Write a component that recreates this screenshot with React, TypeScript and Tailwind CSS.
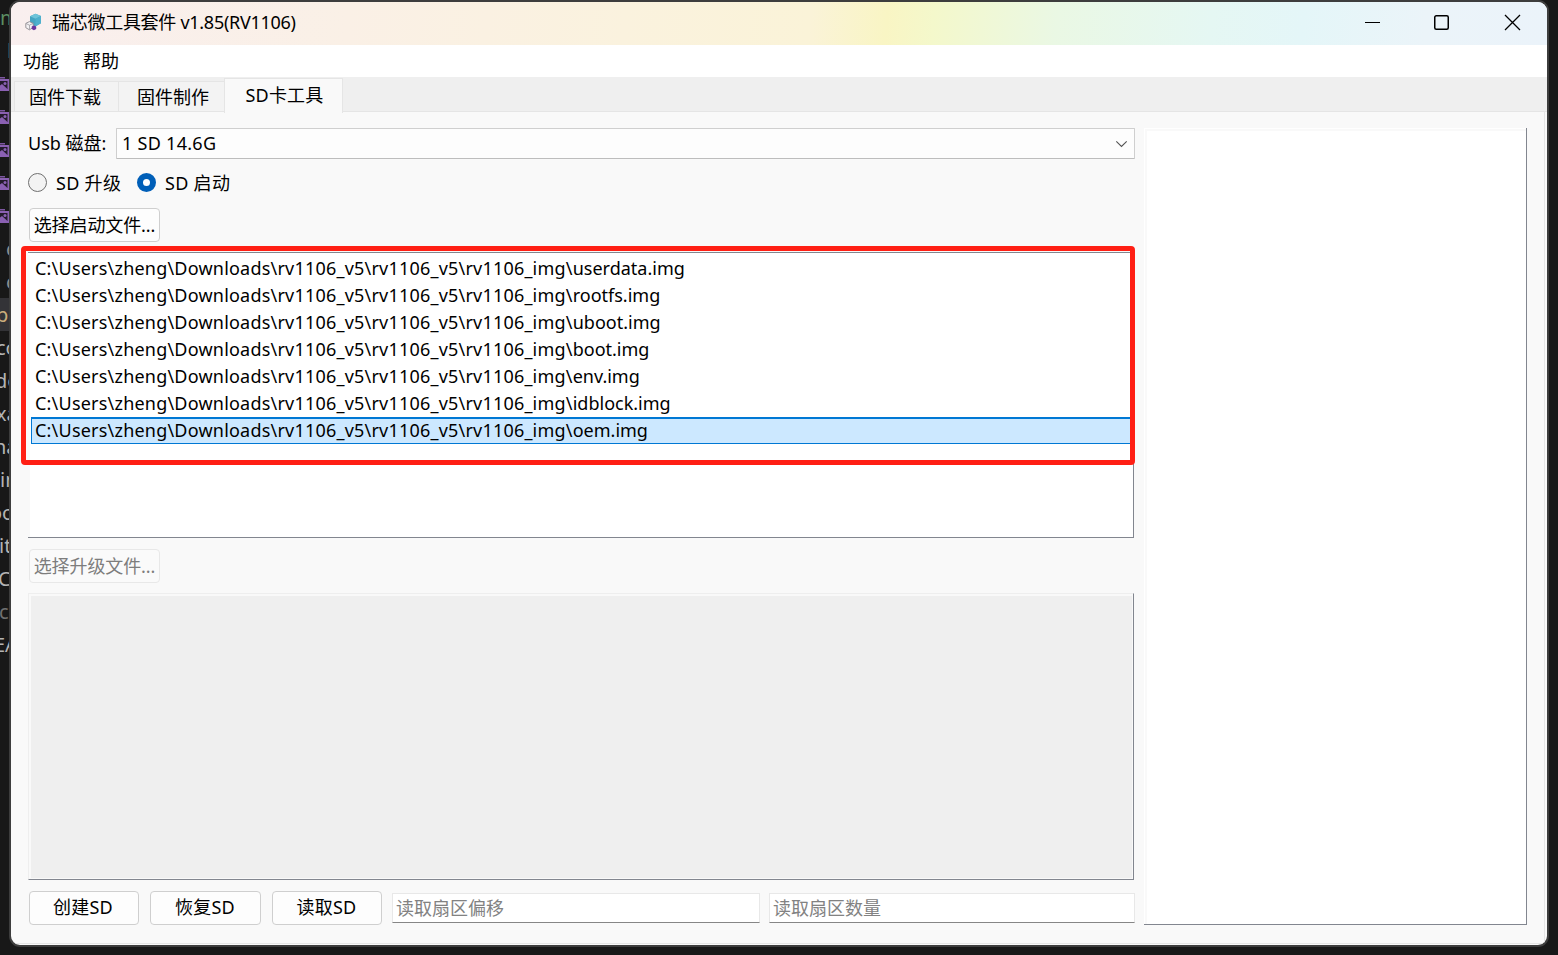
import React from "react";

const ui = "font-['Noto_Sans','Noto_Sans_CJK_SC',sans-serif]";

const base = "C:\\Users\\zheng\\Downloads\\rv1106_v5\\rv1106_v5\\rv1106_img\\";
const files = ["userdata.img", "rootfs.img", "uboot.img", "boot.img", "env.img", "idblock.img", "oem.img"];

const behind: { t: string; c: string }[] = [
  { t: "m", c: "text-[#5c8f62] pl-0" },
  { t: "b", c: "text-[#2f8f75] pl-[7px]" },
  { t: "*", c: "" },
  { t: "*", c: "" },
  { t: "*", c: "" },
  { t: "*", c: "" },
  { t: "*", c: "" },
  { t: "c", c: "text-[#8f8f8f] pl-[6px]" },
  { t: "c", c: "text-[#8f8f8f] pl-[6px]" },
  { t: "pu", c: "bg-[#333337] text-[#c9ad7c] -ml-[4px]" },
  { t: "co", c: "text-[#b4b4b4] -ml-[4px]" },
  { t: "de", c: "text-[#b4b4b4] -ml-[5px]" },
  { t: "xa", c: "text-[#b4b4b4] -ml-[4px]" },
  { t: "na", c: "text-[#b4b4b4] -ml-[6px]" },
  { t: "in", c: "text-[#b4b4b4]" },
  { t: "oo", c: "text-[#b4b4b4] -ml-[10px]" },
  { t: "it", c: "text-[#b4b4b4] -ml-px" },
  { t: "C", c: "text-[#b4b4b4] -ml-[2px]" },
  { t: "cl", c: "text-[#707070] -ml-px" },
  { t: "EA", c: "text-[#b4b4b4] -ml-[6px]" },
];

function Picture() {
  return (
    <svg width="10" height="16" viewBox="0 0 10 16" className="block shrink-0">
      <path d="M0 1h5v1.5H0z" fill="#7c56a0" />
      <path d="M0 3h9.5v12H0z" fill="#8a60b2" />
      <path d="M0 5h7.5v8H0z" fill="#231b2c" />
      <path d="M0 9.5 2 8l5.5 5H0z" fill="#8a60b2" />
      <circle cx="5" cy="7.5" r="1.5" fill="#8a60b2" />
    </svg>
  );
}

function AppIcon() {
  return (
    <svg width="17" height="18" viewBox="0 0 17 18" className="-mt-[3px] block shrink-0">
      <path d="M10.5 0.8 16 3v7.2L10.3 13.4 5 10.5V3.2z" fill="#45a5c2" />
      <path d="M10.5 0.8 16 3 10.6 5.8 5 3.2z" fill="#6fc4d9" />
      <path d="M10.6 5.8 16 3v7.2L10.3 13.4z" fill="#4eb0cd" />
      <path d="M4.4 8.6 8.2 10.3v4.2l-3.8 2.3L.8 14.7v-4.3z" fill="#f4f2f4" stroke="#8d8a90" strokeWidth="0.9" />
      <path d="M1 10.5 4.5 12.2 8 10.4M4.5 12.2v4.4" fill="none" stroke="#9c999f" strokeWidth="0.8" />
      <path d="m9 12.5 2.2 1v2.4l-2.3 1.4-2.2-1.3v-2.5z" fill="#6a35a0" />
    </svg>
  );
}

function Button({ children, className }: { children: React.ReactNode; className: string }) {
  return (
    <button className={`flex h-[34px] shrink-0 items-center justify-center whitespace-nowrap rounded-[4px] border ${className}`}>
      {children}
    </button>
  );
}

export default function App() {
  return (
    <div className={`relative flex h-[955px] w-[1558px] overflow-hidden bg-[#181818] text-[18px] leading-[26px] text-black ${ui}`}>
      <div className="-mr-[2px] flex w-[11px] shrink-0 flex-col overflow-hidden pt-px">
        {behind.map((r, i) => (
          <div key={i} className={`flex h-[33px] shrink-0 items-center text-[20px] ${r.c}`}>
            {r.t === "*" ? <Picture /> : r.t}
          </div>
        ))}
      </div>

      <div className="z-0 flex h-[947px] w-[1540px] shrink-0 flex-col overflow-hidden rounded-[11px] border-2 border-[#3d3d3d] bg-[#f9f9f9]">
        <div className="flex h-[43px] shrink-0 items-center bg-[linear-gradient(95deg,#f9efef_0%,#faf0e6_22%,#faf2de_40%,#faf3d8_52%,#f9f5c4_57%,#f4f8cb_60%,#eaf8e4_68%,#e5f7f3_78%,#e4f6f8_84%,#ebf4f9_92%,#ebf3fa_100%)] pl-[14px]">
          <AppIcon />
          <span className="-mt-[3px] ml-[10px] whitespace-nowrap text-[18px] tracking-[-0.28px]">瑞芯微工具套件 v1.85(RV1106)</span>
          <svg className="-mt-[2px] ml-auto mr-[26px]" width="157" height="17" viewBox="0 0 157 17" fill="none" stroke="#000">
            <path d="M1 8.5h15" />
            <rect x="70.75" y="1.75" width="13.5" height="13.5" rx="1.5" strokeWidth="1.5" />
            <path d="m141 1 15 15m0-15-15 15" strokeWidth="1.3" />
          </svg>
        </div>

        <div className="flex h-8 shrink-0 items-center gap-6 bg-white pl-3">
          <span>功能</span>
          <span>帮助</span>
        </div>

        <div className="flex h-[35px] shrink-0 items-end border-b border-[#e5e5e5] bg-[#efefef] pl-[3px]">
          <div className="flex h-[30px] w-[105px] items-center justify-center border border-b-0 border-[#e5e5e5] bg-[#f3f3f3] pr-[3px]">固件下载</div>
          <div className="flex h-[30px] w-[105px] items-center justify-center border-t border-[#e5e5e5] bg-[#f3f3f3] pl-[3px]">固件制作</div>
          <div className="z-10 -mb-[2px] flex h-[35px] w-[119px] items-center justify-center border border-b-0 border-[#e5e5e5] bg-[#f9f9f9] pb-[2px] pl-[2px] tracking-[0.2px]">SD卡工具</div>
        </div>

        <div className="mr-[2px] mb-[1px] flex min-h-0 flex-1 gap-[9px] border-r border-b border-[#e5e5e5] pl-[17px] pt-4">
          <div className="flex w-[1107px] shrink-0 flex-col">
            <div className="flex h-[31px] items-center">
              <span className="w-[88px] shrink-0 whitespace-nowrap pb-[2px]">Usb 磁盘:</span>
              <div className="flex h-[31px] flex-1 items-center justify-between rounded-[1px] border border-[#cfcfcf] border-b-[#bdbdbd] bg-[#fdfdfd] pl-[5px] pr-[6px]">
                <span className="pb-[2px] tracking-[0.28px]">1 SD 14.6G</span>
                <svg width="13" height="8" viewBox="0 0 13 8" fill="none" stroke="#555" strokeWidth="1.1">
                  <path d="m1.3 1.3 5.2 5.2 5.2-5.2" />
                </svg>
              </div>
            </div>

            <div className="flex h-[49px] items-center pb-[2px]">
              <span className="h-[19px] w-[19px] rounded-full border border-[#707070] bg-[#f3f3f3]" />
              <span className="ml-[9px] w-[81px] whitespace-nowrap tracking-[0.3px]">SD 升级</span>
              <span className="h-[19px] w-[19px] rounded-full border-[6px] border-[#005fb8] bg-white" />
              <span className="ml-[9px] whitespace-nowrap tracking-[0.3px]">SD 启动</span>
            </div>

            <Button className="ml-px w-[131px] border-[#cfcfcf] bg-[#fdfdfd] tracking-[-0.1px]">选择启动文件...</Button>

            <div className="relative mt-[10px] h-[286px] w-[1106px] shrink-0 border-t border-r border-b border-[#82868f] bg-white pt-[2px]">
              <div className="h-full border-l-2 border-[#f9f9f9]">
                {files.map((f, i) => (
                  <div
                    key={f}
                    className={
                      i === files.length - 1
                        ? "ml-px flex h-[27px] items-center whitespace-pre border border-t-2 border-[#0078d4] bg-[#cce8ff] pb-[2px] pl-[3px]"
                        : "flex h-[27px] items-center whitespace-pre pb-[2px] pl-[5px]"
                    }
                  >
                    <span className="tracking-[0.21px]">{base}</span>
                    <span>{f}</span>
                  </div>
                ))}
              </div>
              <div className="absolute -left-[7px] -top-[7px] h-[219px] w-[1114px] rounded-[4px] border-[5px] border-[#ff1f14]" />
            </div>

            <Button className="ml-px mt-[11px] w-[131px] border-[#e8e8e8] bg-[#fafafa] pb-px tracking-[-0.1px] text-[#7d7d7d]">选择升级文件...</Button>

            <div className="mt-[10px] h-[287px] w-[1106px] shrink-0 border border-t-[#eeeeee] border-l-[#eeeeee] border-r-[#82868f] border-b-[#82868f] bg-[#f9f9f9] pb-px pl-[2px] pr-px pt-[2px]">
              <div className="h-full bg-[#efefef]" />
            </div>

            <div className="mt-[11px] flex pl-px">
              <Button className="w-[110px] border-[#cfcfcf] bg-[#fdfdfd] pb-[2px] pr-[2px] tracking-[0.2px]">创建SD</Button>
              <Button className="ml-[11px] w-[111px] border-[#cfcfcf] bg-[#fdfdfd] pb-[2px] pr-px tracking-[0.2px]">恢复SD</Button>
              <Button className="ml-[11px] w-[110px] border-[#cfcfcf] bg-[#fdfdfd] pb-[2px] pr-px tracking-[0.2px]">读取SD</Button>
              <div className="ml-[10px] mt-[2px] flex h-[30px] w-[368px] items-center border border-[#e8e8e8] border-b-[#868686] bg-white pl-[3px] text-[#828282]">读取扇区偏移</div>
              <div className="ml-[9px] mt-[2px] flex h-[30px] w-[366px] items-center border border-[#e8e8e8] border-b-[#868686] bg-white pl-[3px] text-[#828282]">读取扇区数量</div>
            </div>
          </div>

          <div className="h-[797px] w-[383px] shrink-0 border-r border-b border-[#82868f] bg-white pl-px pt-px">
            <div className="h-full border-l-2 border-t-2 border-[#f9f9f9]" />
          </div>
        </div>
      </div>
    </div>
  );
}
